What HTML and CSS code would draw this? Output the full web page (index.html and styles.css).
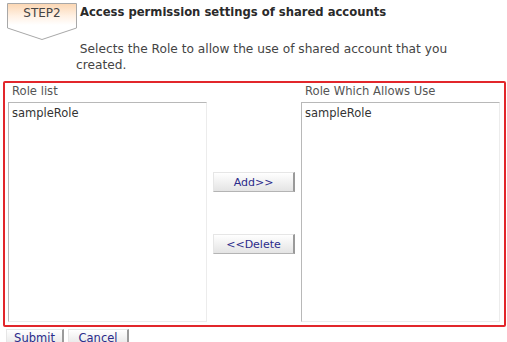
FILE: index.html
```html
<!DOCTYPE html>
<html>
<head>
<meta charset="utf-8">
<link rel="stylesheet" href="styles.css">
</head>
<body>
<div class="page">
  <div class="step-row">
    <div class="badge">
      <svg class="badge-shape" width="72" height="38" viewBox="0 0 72 38">
        <defs>
          <linearGradient id="bg" x1="0" y1="0" x2="0" y2="1">
            <stop offset="0" stop-color="#fbd6b2"/>
            <stop offset="0.35" stop-color="#fff1e4"/>
            <stop offset="0.6" stop-color="#ffffff"/>
          </linearGradient>
        </defs>
        <polygon points="0.5,0.5 69.5,0.5 69.5,25 35,36.5 0.5,25" fill="url(#bg)" stroke="#a8a8a8" stroke-width="1"/>
      </svg>
      <span class="badge-text">STEP2</span>
    </div>
    <div class="step-title">Access permission settings of shared accounts</div>
  </div>
  <p class="desc">&nbsp;Selects the Role to allow the use of shared account that you<br>created.</p>
  <div class="frame">
    <div class="col">
      <div class="label">Role list</div>
      <div class="listbox"><div class="opt">sampleRole</div></div>
    </div>
    <div class="mid">
      <button class="btn btn-wide">Add&gt;&gt;</button>
      <button class="btn btn-wide">&lt;&lt;Delete</button>
    </div>
    <div class="col">
      <div class="label">Role Which Allows Use</div>
      <div class="listbox"><div class="opt">sampleRole</div></div>
    </div>
  </div>
  <div class="actions">
    <button class="btn btn-sub">Submit</button>
    <button class="btn btn-can">Cancel</button>
  </div>
</div>
</body>
</html>
```
FILE: styles.css
```css
html, body {
  margin: 0;
  padding: 0;
  background: #ffffff;
}
body {
  font-family: "DejaVu Sans", Verdana, sans-serif;
  font-size: 11px;
  color: #333333;
  width: 507px;
  height: 342px;
  overflow: hidden;
}
.page {
  padding: 3px 0 0 0;
}
.step-row {
  display: flex;
  align-items: flex-start;
  padding-left: 7px;
}
.badge {
  position: relative;
  width: 72px;
  height: 38px;
  flex: none;
}
.badge-shape {
  position: absolute;
  left: 0;
  top: 0;
}
.badge-text {
  position: absolute;
  left: 0;
  top: 3px;
  width: 70px;
  text-align: center;
  font-size: 12px;
  color: #444444;
  line-height: 14px;
}
.step-title {
  margin-left: 1px;
  font-weight: bold;
  font-size: 11.6px;
  line-height: 14px;
  padding-top: 2px;
  color: #2a2a2a;
}
.desc {
  margin: 0;
  padding: 0 0 0 76px;
  line-height: 16px;
  font-size: 12.2px;
  color: #444444;
}
.frame {
  margin: 8px 1px 0 3px;
  height: 246px;
  border: 2px solid #e2262b;
  border-radius: 2px;
  box-sizing: border-box;
  display: flex;
  padding: 0 4px 0 3px;
}
.col {
  display: flex;
  flex-direction: column;
  width: 199px;
  flex: none;
}
.label {
  color: #555555;
  font-size: 11.6px;
  line-height: 16px;
  padding: 0 0 0 4px;
  height: 19px;
  box-sizing: border-box;
}
.listbox {
  height: 220px;
  border: 1px solid #b8b8b8;
  border-right-color: #ececec;
  border-bottom-color: #ececec;
  box-sizing: border-box;
  background: #fff;
  padding: 3px 3px;
}
.opt {
  font-size: 11.5px;
  line-height: 14px;
  color: #333333;
}
.mid {
  flex: 1;
  display: flex;
  flex-direction: column;
  align-items: center;
  padding-top: 89px;
  gap: 42px;
}
.btn {
  font-family: "DejaVu Sans", Verdana, sans-serif;
  font-size: 11px;
  color: #2b2b8a;
  background: linear-gradient(#ffffff, #e4e4e4);
  border: 1px solid #e6e6e6;
  border-right: 2px solid #9a9a9a;
  border-bottom: 1px solid #b4b4b4;
  padding: 0;
  height: 20px;
  line-height: 17px;
  box-sizing: border-box;
  margin: 0;
}
.btn-wide {
  width: 82px;
}
.actions {
  display: flex;
  gap: 4px;
  padding: 2px 0 0 6px;
}
.btn-sub {
  width: 58px;
  height: 18px;
  font-size: 11.5px;
}
.btn-can {
  width: 61px;
  height: 18px;
  font-size: 11.5px;
}
```
